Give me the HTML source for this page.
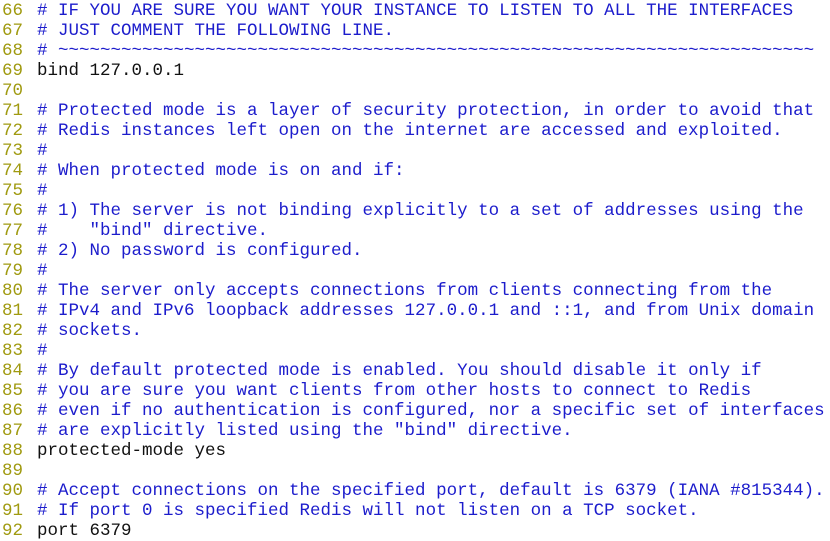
<html><head><style>
body{margin:0;background:#fff;width:830px;height:540px;overflow:hidden}
pre{margin:0;position:absolute;top:1px;left:0;font-family:"Liberation Mono",monospace;font-size:17.5px;line-height:20px;color:#111}
.n{color:#a09a10;display:inline-block;width:37px;padding-left:2px;box-sizing:border-box}
.c{color:#1c1ccc}
</style></head><body><pre><span class="n">66</span><span class="c"># IF YOU ARE SURE YOU WANT YOUR INSTANCE TO LISTEN TO ALL THE INTERFACES</span>
<span class="n">67</span><span class="c"># JUST COMMENT THE FOLLOWING LINE.</span>
<span class="n">68</span><span class="c"># ~~~~~~~~~~~~~~~~~~~~~~~~~~~~~~~~~~~~~~~~~~~~~~~~~~~~~~~~~~~~~~~~~~~~~~~~</span>
<span class="n">69</span>bind 127.0.0.1
<span class="n">70</span>
<span class="n">71</span><span class="c"># Protected mode is a layer of security protection, in order to avoid that</span>
<span class="n">72</span><span class="c"># Redis instances left open on the internet are accessed and exploited.</span>
<span class="n">73</span><span class="c">#</span>
<span class="n">74</span><span class="c"># When protected mode is on and if:</span>
<span class="n">75</span><span class="c">#</span>
<span class="n">76</span><span class="c"># 1) The server is not binding explicitly to a set of addresses using the</span>
<span class="n">77</span><span class="c">#    "bind" directive.</span>
<span class="n">78</span><span class="c"># 2) No password is configured.</span>
<span class="n">79</span><span class="c">#</span>
<span class="n">80</span><span class="c"># The server only accepts connections from clients connecting from the</span>
<span class="n">81</span><span class="c"># IPv4 and IPv6 loopback addresses 127.0.0.1 and ::1, and from Unix domain</span>
<span class="n">82</span><span class="c"># sockets.</span>
<span class="n">83</span><span class="c">#</span>
<span class="n">84</span><span class="c"># By default protected mode is enabled. You should disable it only if</span>
<span class="n">85</span><span class="c"># you are sure you want clients from other hosts to connect to Redis</span>
<span class="n">86</span><span class="c"># even if no authentication is configured, nor a specific set of interfaces</span>
<span class="n">87</span><span class="c"># are explicitly listed using the "bind" directive.</span>
<span class="n">88</span>protected-mode yes
<span class="n">89</span>
<span class="n">90</span><span class="c"># Accept connections on the specified port, default is 6379 (IANA #815344).</span>
<span class="n">91</span><span class="c"># If port 0 is specified Redis will not listen on a TCP socket.</span>
<span class="n">92</span>port 6379
</pre></body></html>
